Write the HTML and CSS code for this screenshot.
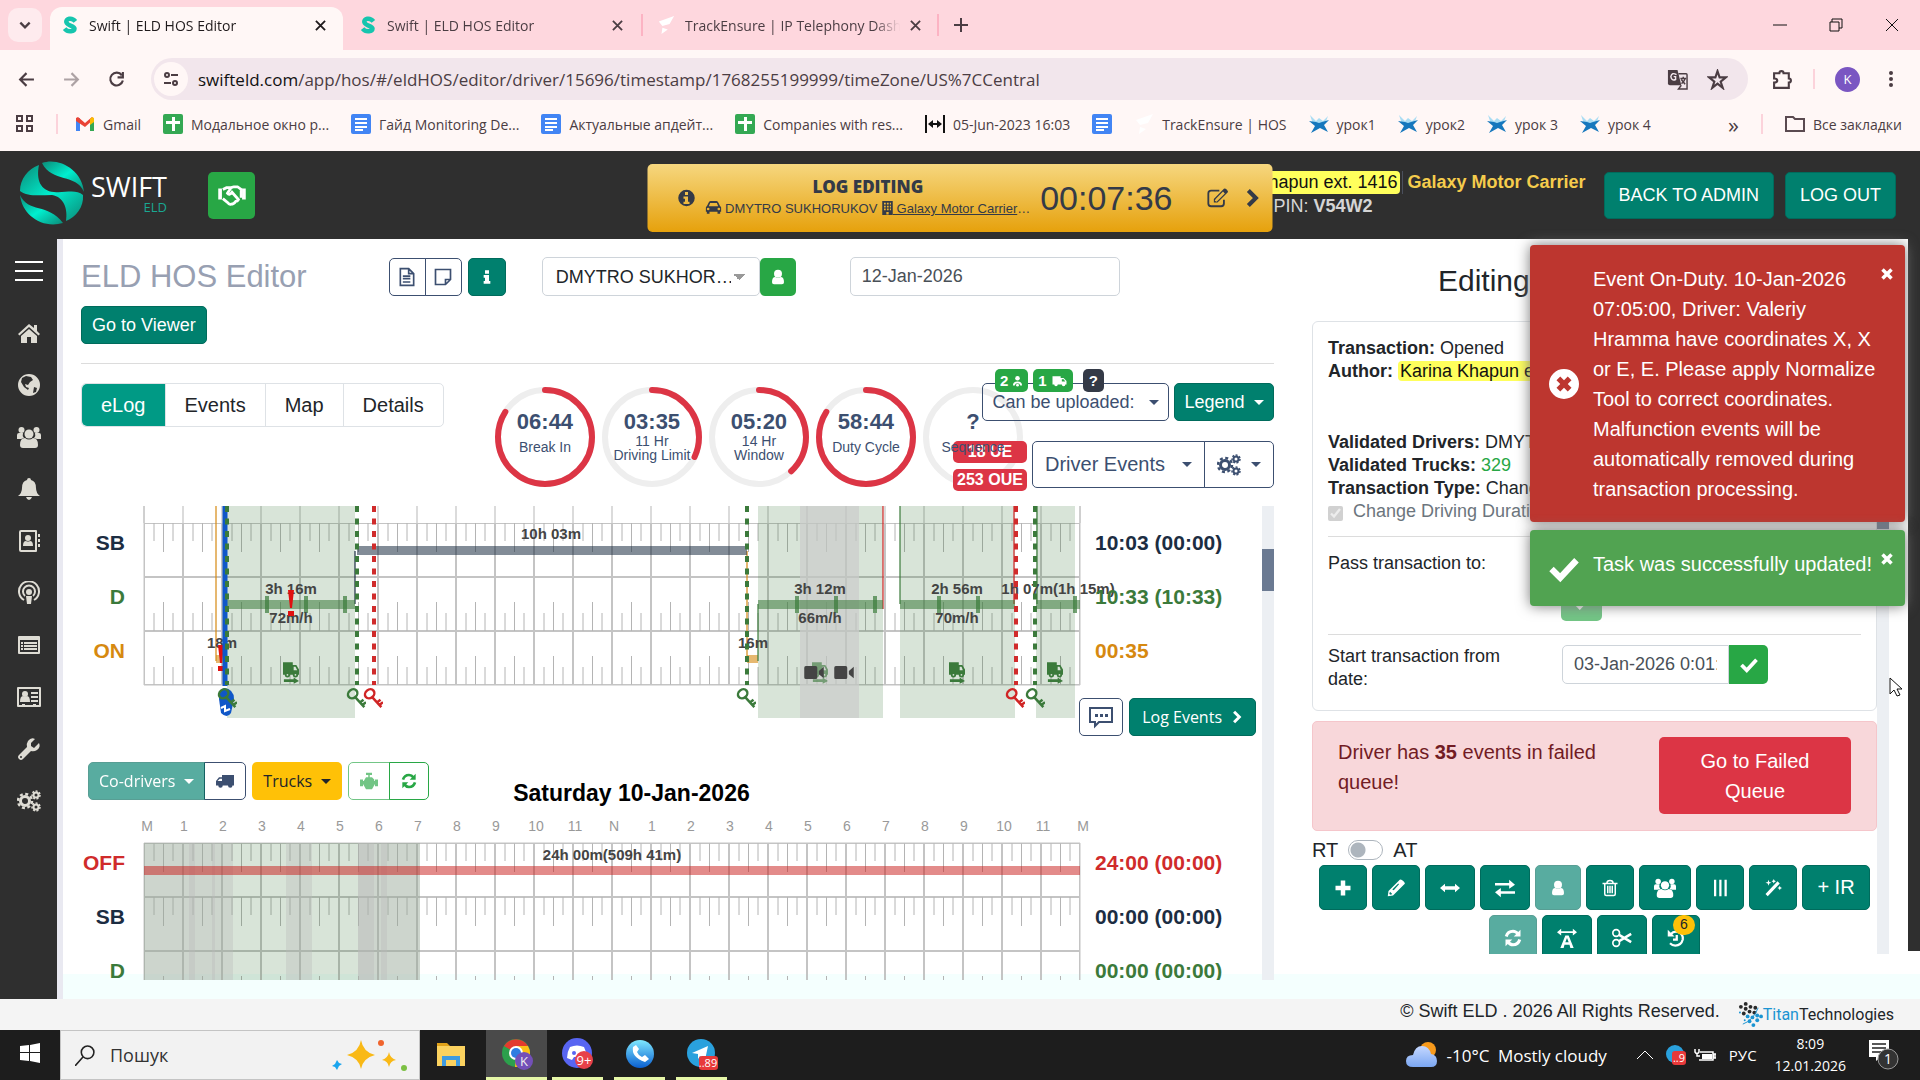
FILE: index.html
```html
<!DOCTYPE html>
<html lang="en">
<head>
    <meta charset="UTF-8">
    <meta name="viewport" content="width=device-width, initial-scale=1.0">
    <title>Swift | ELD HOS Editor</title>
    <link rel="stylesheet" href="styles.css">
</head>
<body>
    <!-- Icon set -->
    <svg class="sprite" aria-hidden="true">
        <defs>
            <linearGradient id="teal" x1="0" y1="0" x2="1" y2="1">
                <stop offset="0" stop-color="#0b8a77"/><stop offset=".5" stop-color="#00efcf"/><stop offset="1" stop-color="#0b8a77"/>
            </linearGradient>
            <linearGradient id="sky" x1="0" y1="0" x2="0" y2="1">
                <stop offset="0" stop-color="#7fe9ff"/><stop offset="1" stop-color="#0a5fd0"/>
            </linearGradient>
            <linearGradient id="cloud" x1="0" y1="0" x2="0" y2="1">
                <stop offset="0" stop-color="#c5d8ff"/><stop offset="1" stop-color="#7ba7f2"/>
            </linearGradient>
            <!-- Hour grid, ticks hanging from the top or standing on the bottom of a row -->
            <pattern id="ticksTop" width="39" height="54" patternUnits="userSpaceOnUse">
                <path d="M0 0V54M39 0V54M0 0H39M0 54H39" stroke="#c4c4c4" stroke-width="2"/>
                <path d="M10 0V18M29 0V18M19.500 0V29" stroke="#b4b4b4"/>
            </pattern>
            <pattern id="ticksBottom" width="39" height="54" patternUnits="userSpaceOnUse">
                <path d="M0 0V54M39 0V54M0 0H39M0 54H39" stroke="#c4c4c4" stroke-width="2"/>
                <path d="M10 54V36M29 54V36M19.500 54V25" stroke="#b4b4b4"/>
            </pattern>
        </defs>
        <symbol id="swift" viewBox="0 0 64 64">
            <path fill="url(#teal)" d="M22 2C38-4 62 8 64 31C56 12 32 22 22 2z"/>
            <path fill="url(#teal)" d="M19 4C16 18 20 30 34 31C46 32 56 28 63 34C64 46 56 56 46 60C48 48 44 36 32 34C20 34 8 36 0 30C0 18 8 8 19 4z"/>
            <path fill="url(#teal)" d="M0 34C8 52 28 42 43 62C22 68 2 54 0 34z"/>
        </symbol>
        <symbol id="favicon" viewBox="0 0 20 20">
            <path fill="none" stroke="#16c5ae" stroke-width="5" d="M16 6C12 1 5 3 6 7S15 11 15 14S8 19 4 14"/>
        </symbol>
        <symbol id="home" viewBox="0 0 24 24"><path d="M12 3L1 13l1.500 1.500L12 6l9.500 8.500L23 13l-3-3V4h-3v3zM12 8l-8 7v7h6v-6h4v6h6v-7z"/></symbol>
        <symbol id="globe" viewBox="0 0 24 24"><path fill-rule="evenodd" d="M12 1a11 11 0 100 22a11 11 0 000-22zM9 3l5 1l2 3l-3 2l-2 3l-3-1l1 3l3 1l-1 2l-4-3l-3-5l1-4zM17 14l3 1l-1 4l-3 1z"/></symbol>
        <symbol id="users" viewBox="0 0 24 24"><circle cx="4.500" cy="5" r="3"/><circle cx="19.500" cy="5" r="3"/><path d="M0 14V10q0-2 2-2h4q-1 3 1 5l-3 1zM24 14V10q0-2-2-2h-4q1 3-1 5l3 1z"/><circle cx="12" cy="9" r="4.500"/><path d="M3 20q0-7 5-7q4 3 8 0q5 0 5 7q0 3-3 3H6q-3 0-3-3z"/></symbol>
        <symbol id="bell" viewBox="0 0 24 24"><path d="M12 1q2 0 2 2q5 1 5 8q0 5 4 8H1q4-3 4-8q0-7 5-8q0-2 2-2zM9 20h6q-1 3-3 3t-3-3z"/></symbol>
        <symbol id="book" viewBox="0 0 24 24"><path fill-rule="evenodd" d="M4 1h15q1 0 1 1v20q0 1-1 1H4q-2 0-2-2V3q0-2 2-2zM4 3v18h14V3z"/><circle cx="11" cy="9" r="3"/><path d="M6 17q0-5 3-5q2 1 4 0q3 0 3 5zM21 5h2v3h-2zM21 10h2v3h-2zM21 15h2v3h-2z"/></symbol>
        <symbol id="podcast" viewBox="0 0 24 24"><path fill="none" stroke="currentColor" stroke-width="2" d="M7 19a10 10 0 1110 0M8 15a6 6 0 118 0"/><circle cx="12" cy="11" r="3"/><path d="M9 15h6l-1 8h-4z"/></symbol>
        <symbol id="list" viewBox="0 0 24 24"><path fill-rule="evenodd" d="M2 3h20q1 0 1 1v16q0 1-1 1H2q-1 0-1-1V4q0-1 1-1zM3 7v12h18V7z"/><path d="M4 9h2v2H4zM7 9h13v2H7zM4 12h2v2H4zM7 12h13v2H7zM4 15h2v2H4zM7 15h13v2H7z"/></symbol>
        <symbol id="idcard" viewBox="0 0 24 24"><path fill-rule="evenodd" d="M1 2h22q1 0 1 1v18q0 1-1 1H1q-1 0-1-1V3q0-1 1-1zM2 4v16h3v-1h3v1h8v-1h3v1h3V4z"/><circle cx="8" cy="9" r="3"/><path d="M3 17q0-6 3-6q2 1 4 0q3 0 3 6zM14 7h7v2h-7zM14 11h7v2h-7zM14 15h7v2h-7z"/></symbol>
        <symbol id="wrench" viewBox="0 0 24 24"><path fill-rule="evenodd" d="M22 6q2 4-2 7q-3 2-6 1l-8 8q-2 2-4 0t0-4l8-8q-1-3 1-6q3-4 7-2l-4 4v3l3 2zM4 19a1 1 0 100 2a1 1 0 000-2z"/></symbol>
        <symbol id="cogs" viewBox="0 0 24 24"><circle cx="8" cy="12" r="4.500" fill="none" stroke="currentColor" stroke-width="3"/><circle cx="8" cy="12" r="7" fill="none" stroke="currentColor" stroke-width="2.500" stroke-dasharray="3 2.500"/><circle cx="19" cy="6" r="2.500" fill="none" stroke="currentColor" stroke-width="2"/><circle cx="19" cy="6" r="4" fill="none" stroke="currentColor" stroke-width="1.500" stroke-dasharray="2 1.600"/><circle cx="19" cy="18" r="2.500" fill="none" stroke="currentColor" stroke-width="2"/><circle cx="19" cy="18" r="4" fill="none" stroke="currentColor" stroke-width="1.500" stroke-dasharray="2 1.600"/></symbol>
        <symbol id="handshake" viewBox="0 0 30 24"><path d="M0 5h4v12H0zM26 5h4v12h-4z"/><path fill="none" stroke="currentColor" stroke-width="3" d="M5 6l4-2h5l-4 6q2 3 5-1l7 8q-1 2-3 2q-2 3-5 3q-2 1-4-2l-5-4M14 4l3-1h4l4 3v9"/></symbol>
        <symbol id="file" viewBox="0 0 24 24"><path fill="none" stroke="currentColor" stroke-width="2" d="M4 2h10l6 6v14H4zM14 2v6h6M7 11h9M7 14h9M7 18h9"/></symbol>
        <symbol id="note" viewBox="0 0 24 24"><path fill="none" stroke="currentColor" stroke-width="2" d="M3 3h18v12l-6 6H3zM21 15h-6v6"/></symbol>
        <symbol id="info" viewBox="0 0 24 24"><path d="M9 2h6v5H9zM7 9h8v9h2v4H7v-4h2v-5H7z"/></symbol>
        <symbol id="infoCircle" viewBox="0 0 24 24"><path fill-rule="evenodd" d="M12 1a11 11 0 100 22a11 11 0 000-22zM10 4h4v4h-4zM8 10h6v7h2v3H8v-3h2v-4H8z"/></symbol>
        <symbol id="user" viewBox="0 0 24 24"><circle cx="12" cy="7" r="6"/><path d="M3 20q0-8 5-8q4 3 8 0q5 0 5 8q0 3-3 3H6q-3 0-3-3z"/></symbol>
        <symbol id="car" viewBox="0 0 24 24"><path fill-rule="evenodd" d="M2 11l3-6q1-2 3-2h8q2 0 3 2l3 6q2 1 2 3v5h-2v3h-4v-3H6v3H2v-3H0v-5q0-2 2-3zM5 11h14l-2-5H7zM4 13a2 2 0 100 4a2 2 0 000-4zM20 13a2 2 0 100 4a2 2 0 000-4z"/></symbol>
        <symbol id="building" viewBox="0 0 20 24"><path fill-rule="evenodd" d="M1 0h18v24H1zM4 3v3h3V3zM9 3v3h3V3zM14 3v3h2V3zM4 8v3h3V8zM9 8v3h3V8zM14 8v3h2V8zM4 13v3h3v-3zM9 13v3h3v-3zM14 13v3h2v-3zM8 19v4h4v-4z"/></symbol>
        <symbol id="edit" viewBox="0 0 24 24"><path fill="none" stroke="currentColor" stroke-width="2" d="M14 4H5Q2 4 2 7v11q0 3 3 3h11q3 0 3-3v-4"/><path fill-rule="evenodd" d="M19 2q2-1 4 2q1 1 0 2L12 17H8v-4zM10 13l-1 2l2 1l9-9l-2-2z"/></symbol>
        <symbol id="chevron" viewBox="0 0 16 24"><path fill="none" stroke="currentColor" stroke-width="5" d="M3 3l9 9l-9 9"/></symbol>
        <symbol id="truck" viewBox="0 0 24 24"><path fill-rule="evenodd" d="M24 4v14h-2a3 3 0 01-6 0H9a3 3 0 01-6 0H0v-6l4-5h4V4zM2 12h6V9H5z"/><circle cx="6" cy="18" r="2"/><circle cx="19" cy="18" r="2"/></symbol>
        <symbol id="truckRight" viewBox="0 0 24 24"><path fill-rule="evenodd" d="M0 4h14v3h5l5 5v6h-2a3 3 0 01-6 0H9a3 3 0 01-6 0H0zM16 9v4h6l-3-4z"/><circle cx="6" cy="18" r="2"/><circle cx="19" cy="18" r="2"/></symbol>
        <symbol id="truckArrow" viewBox="0 0 18 24"><path fill-rule="evenodd" d="M0 0h11v3h4l3 5v6H0zM12 5v4h4l-2-4z"/><circle cx="5" cy="14" r="3"/><circle cx="14" cy="14" r="3"/><circle cx="5" cy="14" r="1" fill="#d8e3d8"/><circle cx="14" cy="14" r="1" fill="#d8e3d8"/><path d="M1 19h11v-2l6 4l-6 3v-2H1z"/></symbol>
        <symbol id="driver" viewBox="0 0 24 24"><circle cx="12" cy="6" r="5"/><path d="M2 22q0-9 10-9t10 9h-4q-1-5-6-5t-6 5z"/><circle cx="12" cy="21" r="3"/></symbol>
        <symbol id="camera" viewBox="0 0 24 16"><path d="M2 0h12q2 0 2 2v12q0 2-2 2H2q-2 0-2-2V2q0-2 2-2zM18 6l6-5v14l-6-5z"/></symbol>
        <symbol id="key" viewBox="0 0 24 24"><g fill="none" stroke="currentColor" stroke-width="3"><ellipse cx="8" cy="7" rx="6" ry="5" transform="rotate(-40 8 7)"/><path d="M11 11l11 12M17 17l4-3M20 20l4-3"/></g></symbol>
        <symbol id="bang" viewBox="0 0 6 26"><path d="M0 0h6l-2 18H2zM0 21h6v5H0z"/></symbol>
        <symbol id="comment" viewBox="0 0 24 24"><path fill="none" stroke="currentColor" stroke-width="2" d="M1 3h22v14H10l-4 4v-4H1z"/><path d="M6 9h3v3H6zM11 9h3v3h-3zM16 9h3v3h-3z"/></symbol>
        <symbol id="engine" viewBox="0 0 24 24"><path d="M8 1h8v3h-3v3h3l3 3v2h1v-2h4v9h-4v-3l-4 7H8l-4-7v3H0v-9h4v2h1l3-5h3V4H8z"/></symbol>
        <symbol id="refresh" viewBox="0 0 24 24"><path fill="none" stroke="currentColor" stroke-width="4" d="M3 10q2-7 9-7q4 0 7 4M21 14q-2 7-9 7q-4 0-7-4"/><path d="M22 1v9h-9zM2 23v-9h9z"/></symbol>
        <symbol id="check" viewBox="0 0 24 24"><path fill="none" stroke="currentColor" stroke-width="5" d="M2 12l7 7L22 5"/></symbol>
        <symbol id="plus" viewBox="0 0 24 24"><path d="M9 2h6v7h7v6h-7v7H9v-7H2V9h7z"/></symbol>
        <symbol id="pencil" viewBox="0 0 24 24"><path fill-rule="evenodd" d="M17 1q2-1 5 2t1 4L8 22l-7 1l1-7zM4 17l-1 3l2 1l2-1zM15 6L7 14l2 1l7-8z"/></symbol>
        <symbol id="arrowsH" viewBox="0 0 24 24"><path d="M0 12l6-5v3h12V7l6 5l-6 5v-3H6v3z"/></symbol>
        <symbol id="exchange" viewBox="0 0 24 24"><path d="M0 6h17V2l7 6l-7 5v-4H0zM24 19H7v4l-7-6l7-5v4h17z"/></symbol>
        <symbol id="trash" viewBox="0 0 24 24"><path fill="none" stroke="currentColor" stroke-width="2" d="M2 6h20M8 5q0-3 4-3t4 3M5 6v14q0 2 2 2h10q2 0 2-2V6M9 9v10M12 9v10M15 9v10"/></symbol>
        <symbol id="bars" viewBox="0 0 24 24"><path d="M4 1h3v22H4zM11 1h3v22h-3zM18 1h3v22h-3z"/></symbol>
        <symbol id="wand" viewBox="0 0 24 24"><path d="M2 20L18 3l3 3L5 23zM6 1l1 3l3 1l-3 1l-1 3l-1-3l-3-1l3-1zM13 0l1 2l2 1l-2 1l-1 2l-1-2l-2-1l2-1zM21 9l1 2l2 1l-2 1l-1 2l-1-2l-2-1l2-1z"/></symbol>
        <symbol id="textWidth" viewBox="0 0 24 24"><path d="M0 5l5-4v3h14V1l5 4l-5 4V6H5v3zM10 9h4l6 15h-4l-1-4H9l-1 4H4zM10 17h4l-2-5z" fill-rule="evenodd"/></symbol>
        <symbol id="cut" viewBox="0 0 24 24"><g fill="none" stroke="currentColor" stroke-width="2"><circle cx="5" cy="6" r="4"/><circle cx="5" cy="18" r="4"/><path stroke-width="3" d="M8 8l15 9M8 16l15-9"/></g></symbol>
        <symbol id="history" viewBox="0 0 24 24"><path fill="none" stroke="currentColor" stroke-width="3" d="M5 7q4-5 10-3q7 3 6 10q-2 8-10 8q-4 0-7-3M13 8v6H8"/><path d="M1 1v9h9z"/></symbol>
        <symbol id="times" viewBox="0 0 24 24"><path fill="none" stroke="currentColor" stroke-width="7" d="M3 3l18 18M21 3L3 21"/></symbol>
        <symbol id="timesCircle" viewBox="0 0 24 24"><path fill-rule="evenodd" d="M12 0a12 12 0 100 24a12 12 0 000-24zM6 9l3-3l3 3l3-3l3 3l-3 3l3 3l-3 3l-3-3l-3 3l-3-3l3-3z"/></symbol>
        <symbol id="close" viewBox="0 0 12 12"><path fill="none" stroke="currentColor" stroke-width="2" d="M1 1l10 10M11 1L1 11"/></symbol>
        <symbol id="sheet" viewBox="0 0 20 20"><rect width="20" height="20" rx="2" fill="#34a853"/><path d="M9 3h3v14H9zM3 7h14v3H3z" fill="#fff"/></symbol>
        <symbol id="doc" viewBox="0 0 20 20"><rect width="20" height="20" rx="2" fill="#4285f4"/><path d="M4 4h12v2H4zM4 8h12v2H4zM4 12h12v2H4zM4 15h8v2H4z" fill="#fff"/></symbol>
        <symbol id="bird" viewBox="0 0 20 20"><path fill="#fff" d="M2 6L19 0l-5 9l-8 2zM6 13l6 2l-7 5z"/></symbol>
        <symbol id="star4" viewBox="0 0 20 20"><path fill="#a9dcf3" d="M1 1l6 6l3-3l4 3l5-5l-3 8H4z"/><path fill="#1577bd" d="M0 7l7 1l3 1l3-1l7-2l-5 5l4 7l-8-4l-9 5l4-7z"/></symbol>
    </svg>

    <!-- Browser -->
    <header class="browser">
        <div class="tab-strip">
            <button class="tab-search" aria-label="Search tabs"><svg viewBox="0 0 12 12"><path d="M2 4l4 4l4-4" fill="none" stroke="currentColor" stroke-width="2"/></svg></button>
            <div class="tab active"><svg class="fav"><use href="#favicon"/></svg><span class="tab-title">Swift | ELD HOS Editor</span><button class="tab-close" aria-label="Close tab"><svg><use href="#close"/></svg></button></div>
            <div class="tab"><svg class="fav"><use href="#favicon"/></svg><span class="tab-title">Swift | ELD HOS Editor</span><button class="tab-close" aria-label="Close tab"><svg><use href="#close"/></svg></button></div>
            <div class="tab bordered"><svg class="fav"><use href="#bird"/></svg><span class="tab-title">TrackEnsure | IP Telephony Dashboard</span><button class="tab-close" aria-label="Close tab"><svg><use href="#close"/></svg></button></div>
            <button class="new-tab" aria-label="New tab"><svg viewBox="0 0 14 14"><path d="M7 0v14M0 7h14" stroke="currentColor" stroke-width="2"/></svg></button>
            <div class="window-buttons">
                <button aria-label="Minimize"><svg viewBox="0 0 14 14"><path d="M0 7h14" stroke="currentColor"/></svg></button>
                <button aria-label="Restore"><svg viewBox="0 0 14 14"><path d="M1 4h9v9H1zM3 4V1h10v9h-3" fill="none" stroke="currentColor"/></svg></button>
                <button aria-label="Close"><svg viewBox="0 0 14 14"><path d="M1 1l12 12M13 1L1 13" stroke="currentColor"/></svg></button>
            </div>
        </div>
        <div class="nav-bar">
            <button class="nav-btn" aria-label="Back"><svg viewBox="0 0 16 16"><path d="M15 8H2M8 2L2 8l6 6" fill="none" stroke="currentColor" stroke-width="2"/></svg></button>
            <button class="nav-btn dim" aria-label="Forward"><svg viewBox="0 0 16 16"><path d="M1 8h13M8 2l6 6l-6 6" fill="none" stroke="currentColor" stroke-width="2"/></svg></button>
            <button class="nav-btn" aria-label="Reload"><svg viewBox="0 0 16 16"><path d="M13 4a6 6 0 101 5M14 1v5H9" fill="none" stroke="currentColor" stroke-width="2"/></svg></button>
            <div class="address">
                <span class="site-info"><svg viewBox="0 0 16 16"><g fill="none" stroke="currentColor" stroke-width="2"><circle cx="4" cy="4" r="2"/><circle cx="12" cy="12" r="2"/><path d="M8 4h7M1 12h7"/></g></svg></span>
                <span class="url"><b>swifteld.com</b>/app/hos/#/eldHOS/editor/driver/15696/timestamp/1768255199999/timeZone/US%7CCentral</span>
                <button class="addr-btn" aria-label="Translate"><svg viewBox="0 0 22 22"><path fill="#4b3d43" d="M1 1h10l4 16H3q-2 0-2-2z"/><path fill="none" stroke="#4b3d43" stroke-width="1.500" d="M12 5h8q1 0 1 1v15h-9l3-4M14 10h6M17 8v2M19 10q-2 5-4 5M15 11l4 5"/><path fill="none" stroke="#f2e6ec" stroke-width="1.500" d="M10 6Q5 3 4 8q1 5 5 3V8H7"/></svg></button>
                <button class="addr-btn" aria-label="Bookmark"><svg viewBox="0 0 20 20"><path fill="none" stroke="currentColor" stroke-width="2" d="M10 2l2 6h6l-5 4l2 6l-5-4l-5 4l2-6l-5-4h6z"/></svg></button>
            </div>
            <button class="nav-btn ext" aria-label="Extensions"><svg viewBox="0 0 20 20"><path fill="none" stroke="currentColor" stroke-width="2" d="M2 4h5a2 2 0 014 0h5v5a2 2 0 010 4v5H2v-5q3 0 3-2t-3-2z"/></svg></button>
            <span class="divider"></span>
            <span class="avatar">K</span>
            <button class="nav-btn menu" aria-label="Menu"><svg viewBox="0 0 16 16"><circle cx="8" cy="2" r="2"/><circle cx="8" cy="8" r="2"/><circle cx="8" cy="14" r="2"/></svg></button>
        </div>
        <nav class="bookmarks">
            <svg class="apps" viewBox="0 0 18 18"><path d="M1 1h5v5H1zM11 1h5v5h-5zM1 11h5v5H1zM11 11h5v5h-5z" fill="none" stroke="currentColor" stroke-width="2"/></svg>
            <span class="divider"></span>
            <a href="#" class="first"><svg viewBox="0 0 20 20"><path fill="#4285f4" d="M1 4h4v13H1z"/><path fill="#34a853" d="M15 6h4v11h-4z"/><path fill="#ea4335" d="M1 4l2-1l7 6l7-6l2 2l-9 8L1 7z"/><path fill="#fbbc04" d="M15 5l2-2l2 1v4l-4 3z"/></svg>Gmail</a>
            <a href="#"><svg><use href="#sheet"/></svg>Модальное окно р...</a>
            <a href="#"><svg><use href="#doc"/></svg>Гайд Monitoring De...</a>
            <a href="#"><svg><use href="#doc"/></svg>Актуальные апдейт...</a>
            <a href="#"><svg><use href="#sheet"/></svg>Companies with res...</a>
            <a href="#"><svg viewBox="0 0 20 20"><path d="M1 1v18M19 1v18" stroke="#111" stroke-width="2"/><path d="M3 10l5-4v3h4V6l5 4l-5 4v-3H8v3z" fill="#111"/></svg>05-Jun-2023 16:03</a>
            <a href="#" aria-label="Document"><svg><use href="#doc"/></svg></a>
            <a href="#"><svg><use href="#bird"/></svg>TrackEnsure | HOS</a>
            <a href="#"><svg><use href="#star4"/></svg>урок1</a>
            <a href="#"><svg><use href="#star4"/></svg>урок2</a>
            <a href="#"><svg><use href="#star4"/></svg>урок 3</a>
            <a href="#"><svg><use href="#star4"/></svg>урок 4</a>
            <span class="more">»</span>
            <span class="divider"></span>
            <a href="#" class="all"><svg viewBox="0 0 20 20"><path fill="none" stroke="#5a4a50" stroke-width="2" d="M1 3h7l2 2h9v12H1z"/></svg>Все закладки</a>
        </nav>
    </header>

    <!-- Application header -->
    <div class="app-header">
        <svg class="logo"><use href="#swift"/></svg>
        <div class="brand"><span>SWIFT</span><small>ELD</small></div>
        <button class="btn-handshake" aria-label="Deals"><svg><use href="#handshake"/></svg></button>
        <div class="account">
            <div class="account-line"><mark>Karina Khapun ext. 1416</mark><span class="carrier">Galaxy Motor Carrier</span></div>
            <div class="account-pin">PIN: <b>V54W2</b></div>
        </div>
        <button class="btn btn-teal btn-top">BACK TO ADMIN</button>
        <button class="btn btn-teal btn-top">LOG OUT</button>
        <div class="log-editing">
            <svg class="le-info"><use href="#infoCircle"/></svg>
            <div class="le-text">
                <strong>LOG EDITING</strong>
                <div><svg class="i16"><use href="#car"/></svg> DMYTRO SUKHORUKOV <a href="#"><svg class="i12"><use href="#building"/></svg> Galaxy Motor Carrier</a>…</div>
            </div>
            <div class="le-timer">00:07:36</div>
            <button aria-label="Edit"><svg class="le-edit"><use href="#edit"/></svg></button>
            <button aria-label="Next"><svg class="le-next"><use href="#chevron"/></svg></button>
        </div>
    </div>

    <div class="shell">
        <nav class="sidebar">
            <button class="burger" aria-label="Toggle menu"><i></i><i></i><i></i></button>
            <a href="#" aria-label="Home"><svg><use href="#home"/></svg></a>
            <a href="#" aria-label="World"><svg><use href="#globe"/></svg></a>
            <a href="#" aria-label="Users"><svg><use href="#users"/></svg></a>
            <a href="#" aria-label="Alerts"><svg><use href="#bell"/></svg></a>
            <a href="#" aria-label="Contacts"><svg><use href="#book"/></svg></a>
            <a href="#" aria-label="Broadcast"><svg><use href="#podcast"/></svg></a>
            <a href="#" aria-label="List"><svg><use href="#list"/></svg></a>
            <a href="#" aria-label="Cards"><svg><use href="#idcard"/></svg></a>
            <a href="#" aria-label="Tools"><svg><use href="#wrench"/></svg></a>
            <a href="#" aria-label="Settings"><svg><use href="#cogs"/></svg></a>
        </nav>

        <main class="editor">
            <div class="title-row">
                <h1>ELD HOS Editor</h1>
                <div class="btn-group">
                    <button class="btn btn-outline" aria-label="Report"><svg class="i20"><use href="#file"/></svg></button>
                    <button class="btn btn-outline" aria-label="Note"><svg class="i20"><use href="#note"/></svg></button>
                </div>
                <button class="btn btn-teal btn-info" aria-label="Info"><svg class="i16"><use href="#info"/></svg></button>
                <div class="driver-pick">
                    <select aria-label="Driver"><option>DMYTRO SUKHOR…</option></select>
                    <button class="btn btn-green" aria-label="Driver profile"><svg class="i16"><use href="#user"/></svg></button>
                </div>
                <input class="field date" type="text" aria-label="Log date" value="12-Jan-2026">
            </div>
            <button class="btn btn-teal viewer">Go to Viewer</button>
            <hr>

            <div class="tools-row">
                <div class="tabs">
                    <button class="active">eLog</button><button>Events</button><button>Map</button><button>Details</button>
                </div>
                <div class="gauges">
                    <div class="gauge"><svg viewBox="0 0 100 100"><circle cx="50" cy="50" r="47"/><circle class="arc" cx="50" cy="50" r="47" pathLength="100" stroke-dasharray="84 100"/></svg><div class="gauge-text"><b>06:44</b><span>Break In</span></div></div>
                    <div class="gauge"><svg viewBox="0 0 100 100"><circle cx="50" cy="50" r="47"/><circle class="arc" cx="50" cy="50" r="47" pathLength="100" stroke-dasharray="32 100"/></svg><div class="gauge-text two"><b>03:35</b><span>11 Hr<br>Driving Limit</span></div></div>
                    <div class="gauge"><svg viewBox="0 0 100 100"><circle cx="50" cy="50" r="47"/><circle class="arc" cx="50" cy="50" r="47" pathLength="100" stroke-dasharray="38 100"/></svg><div class="gauge-text two"><b>05:20</b><span>14 Hr<br>Window</span></div></div>
                    <div class="gauge"><svg viewBox="0 0 100 100"><circle cx="50" cy="50" r="47"/><circle class="arc" cx="50" cy="50" r="47" pathLength="100" stroke-dasharray="84 100"/></svg><div class="gauge-text"><b>58:44</b><span>Duty Cycle</span></div></div>
                    <div class="gauge"><svg viewBox="0 0 100 100"><circle cx="50" cy="50" r="47"/></svg><div class="gauge-text"><b>?</b><span>Sequence</span></div></div>
                </div>
                <div class="controls">
                    <div class="controls-line">
                        <button class="btn btn-outline upload">Can be uploaded: <i class="caret"></i>
                            <span class="chips"><span class="chip">2 <svg><use href="#driver"/></svg></span><span class="chip">1 <svg class="i16"><use href="#truckRight"/></svg></span><span class="chip dark">?</span></span>
                        </button>
                        <button class="btn btn-teal legend">Legend <i class="caret"></i></button>
                    </div>
                    <div class="controls-line">
                        <div class="badges"><span>18 UE</span><span>253 OUE</span></div>
                        <div class="btn-group big">
                            <button class="btn btn-outline">Driver Events <i class="caret"></i></button>
                            <button class="btn btn-outline" aria-label="Settings"><svg class="i24"><use href="#cogs"/></svg> <i class="caret"></i></button>
                        </div>
                    </div>
                </div>
            </div>

            <div class="log-scroll">
                <div class="log-list">
                    <section class="log log-first">
                        <div class="row-names"><span class="sb">SB</span><span class="d">D</span><span class="on">ON</span></div>
                        <svg class="chart" viewBox="0 0 936 212">
                            <path d="M0 0V17M39 0V17M78 0V17M117 0V17M156 0V17M195 0V17M234 0V17M273 0V17M312 0V17M351 0V17M390 0V17M429 0V17M468 0V17M507 0V17M546 0V17M585 0V17M624 0V17M663 0V17M702 0V17M741 0V17M780 0V17M819 0V17M858 0V17M897 0V17M936 0V17" stroke="#d0d0d0" stroke-width="1.500"/>
                            <g transform="translate(0 17)"><rect width="936" height="54" fill="url(#ticksTop)"/></g>
                            <g transform="translate(0 71)"><rect width="936" height="54" fill="url(#ticksBottom)"/></g>
                            <g transform="translate(0 125)"><rect width="936" height="54" fill="url(#ticksBottom)"/></g>
                            <path class="frame" d="M0 0V179H936V0"/>
                            <g class="shade">
                                <rect x="83" width="128" height="212"/><rect x="614" width="125" height="212"/><rect x="756" width="115" height="212"/><rect x="892" width="39" height="212"/>
                            </g>
                            <rect class="shade-grey" x="656" width="59" height="212"/>
                            <path d="M72 0V155M603 45V155" stroke="#d68910" stroke-opacity=".6" stroke-width="2"/>
                            <path d="M72 149h7v8h-7zM603 149h11v8h-11z" fill="#d68910" fill-opacity=".6"/>
                            <path d="M211 45V98" stroke="#1c2d42" stroke-opacity=".6" stroke-width="2"/>
                            <path d="M213 40h390v9H213z" fill="#1c2d42" fill-opacity=".55"/>
                            <path d="M614 98V155M756 0V98M893 0V98" stroke="#3b7a3b" stroke-opacity=".6" stroke-width="2"/>
                            <path d="M739 0V103M870 0V98" stroke="#d02525" stroke-opacity=".6" stroke-width="2"/>
                            <path d="M83 94h128v9H83zM614 94h125v9H614zM756 94h115v9H756zM892 94h44v9H892z" fill="#3b7a3b" fill-opacity=".55"/>
                            <path d="M123 90V107M162 90V107M201 90V107M653 90V107M692 90V107M731 90V107M795 90V107M834 90V107M931 90V107" stroke="#3b7a3b" stroke-opacity=".7" stroke-width="4"/>
                            <g class="labels">
                                <text x="407" y="33">10h 03m</text><text x="147" y="88">3h 16m</text><text x="147" y="117">72m/h</text><text x="78" y="142">18m</text><text x="609" y="142">16m</text>
                                <text x="676" y="88">3h 12m</text><text x="676" y="117">66m/h</text><text x="813" y="88">2h 56m</text><text x="813" y="117">70m/h</text><text x="914" y="88">1h 07m(1h 15m)</text>
                            </g>
                            <g fill="#e01010" color="#e01010"><use href="#bang" x="144" y="84" width="6" height="26"/><use href="#bang" x="74" y="139" width="6" height="26"/></g>
                            <path d="M81 0V180" stroke="#1057c8" stroke-width="5"/>
                            <path class="dash green" d="M83 0V179M213 0V179M603 0V179M891 0V179"/>
                            <path class="dash red" d="M230 0V179M872 0V179"/>
                            <g fill="#3b7a3b">
                                <use href="#truckArrow" x="139" y="156" width="16" height="22"/><use href="#truckArrow" x="805" y="156" width="16" height="22"/><use href="#truckArrow" x="903" y="156" width="16" height="22"/>
                                <use href="#truckArrow" x="668" y="156" width="16" height="22" opacity=".6"/>
                            </g>
                            <g fill="#444"><use href="#camera" x="660" y="160" width="20" height="13"/><use href="#camera" x="690" y="160" width="20" height="13"/></g>
                            <path d="M80 182q10 1 10 11l-3 14q-4 6-10 0l-2-14q0-9 5-11z" fill="#1057c8"/><path d="M77 202l4-2v5l5-2" fill="none" stroke="#fff" stroke-width="2"/>
                            <g color="#3b7a3b"><use href="#key" x="73" y="182" width="20" height="20"/><use href="#key" x="202" y="182" width="20" height="20"/><use href="#key" x="592" y="182" width="20" height="20"/><use href="#key" x="881" y="182" width="20" height="20"/></g>
                            <g color="#d02525"><use href="#key" x="219" y="182" width="20" height="20"/><use href="#key" x="861" y="182" width="20" height="20"/></g>
                        </svg>
                        <div class="totals"><span class="sb">10:03 (00:00)</span><span class="d">10:33 (10:33)</span><span class="on">00:35</span></div>
                        <div class="log-actions">
                            <button class="btn btn-outline" aria-label="Comments"><svg class="i24"><use href="#comment"/></svg></button>
                            <button class="btn btn-teal segoe">Log Events <svg class="i12"><use href="#chevron"/></svg></button>
                        </div>
                    </section>

                    <div class="day-head">
                        <div class="btn-group">
                            <button class="btn btn-teal segoe faded">Co-drivers <i class="caret"></i></button>
                            <button class="btn btn-outline" aria-label="Truck"><svg class="i18"><use href="#truck"/></svg></button>
                        </div>
                        <button class="btn btn-yellow segoe">Trucks <i class="caret"></i></button>
                        <div class="btn-group green-group">
                            <button class="btn engine" aria-label="Engine"><svg class="i18"><use href="#engine"/></svg></button>
                            <button class="btn" aria-label="Refresh"><svg class="i16"><use href="#refresh"/></svg></button>
                        </div>
                        <h2>Saturday 10-Jan-2026</h2>
                    </div>

                    <section class="log">
                        <div class="row-names second"><span class="off">OFF</span><span class="sb">SB</span><span class="d">D</span></div>
                        <svg class="chart" viewBox="0 0 936 200">
                            <g class="hours">
                                <text x="3" y="14">M</text><text x="40" y="14">1</text><text x="79" y="14">2</text><text x="118" y="14">3</text><text x="157" y="14">4</text><text x="196" y="14">5</text><text x="235" y="14">6</text><text x="274" y="14">7</text><text x="313" y="14">8</text><text x="352" y="14">9</text><text x="392" y="14">10</text><text x="431" y="14">11</text><text x="470" y="14">N</text><text x="508" y="14">1</text><text x="547" y="14">2</text><text x="586" y="14">3</text><text x="625" y="14">4</text><text x="664" y="14">5</text><text x="703" y="14">6</text><text x="742" y="14">7</text><text x="781" y="14">8</text><text x="820" y="14">9</text><text x="860" y="14">10</text><text x="899" y="14">11</text><text x="939" y="14">M</text>
                            </g>
                            <g transform="translate(0 26)"><rect width="936" height="54" fill="url(#ticksTop)"/></g>
                            <g transform="translate(0 80)"><rect width="936" height="54" fill="url(#ticksTop)"/></g>
                            <g transform="translate(0 134)"><rect width="936" height="54" fill="url(#ticksBottom)"/></g>
                            <path class="frame" d="M0 200V26H936V200"/>
                            <rect class="shade" y="26" width="276" height="180"/>
                            <g class="shade-light"><rect y="26" width="89" height="180"/><rect x="142" y="26" width="26" height="180"/><rect x="214" y="26" width="62" height="180"/><rect x="45" y="26" width="6" height="180"/><rect x="68" y="26" width="3" height="180"/><rect x="214" y="26" width="16" height="180"/><rect x="237" y="26" width="6" height="180"/></g>
                            <path d="M0 49h936v9H0z" fill="#c9211e" fill-opacity=".52"/>
                            <g class="labels"><text x="468" y="43">24h 00m(509h 41m)</text></g>
                        </svg>
                        <div class="totals second"><span class="off">24:00 (00:00)</span><span class="sb">00:00 (00:00)</span><span class="d">00:00 (00:00)</span></div>
                    </section>
                </div>
                <div class="scroll-track"><i></i></div>
            </div>
        </main>

        <aside class="side">
            <h2>Editing</h2>
            <div class="side-scroll">
                <div class="side-content">
                    <div class="card">
                        <p><b>Transaction:</b> Opened</p>
                        <p><b>Author:</b> <mark>Karina Khapun ext. 1416</mark></p>
                        <p class="spaced"><b>Validated Drivers:</b> DMYTRO</p>
                        <p><b>Validated Trucks:</b> <span class="ok">329</span></p>
                        <p><b>Transaction Type:</b> Change Log</p>
                        <label class="check-line"><input type="checkbox" checked disabled> Change Driving Duration</label>
                        <hr>
                        <div class="form-row pass">
                            <span>Pass transaction to:</span>
                            <button class="btn btn-green pale" aria-label="Pass"><svg class="i18"><use href="#check"/></svg></button>
                        </div>
                        <hr>
                        <div class="form-row">
                            <label for="startDate">Start transaction from date:</label>
                            <div class="input-group">
                                <input class="field" id="startDate" type="text" value="03-Jan-2026 0:01:35">
                                <button class="btn btn-green" aria-label="Apply date"><svg class="i18"><use href="#check"/></svg></button>
                            </div>
                        </div>
                    </div>
                    <div class="alert">
                        <p>Driver has <b>35</b> events in failed queue!</p>
                        <button class="btn btn-red">Go to Failed Queue</button>
                    </div>
                    <label class="switch">RT <input type="checkbox"> AT</label>
                    <div class="actions">
                        <button class="btn btn-teal" aria-label="Add"><svg class="i18"><use href="#plus"/></svg></button>
                        <button class="btn btn-teal" aria-label="Edit"><svg class="i18"><use href="#pencil"/></svg></button>
                        <button class="btn btn-teal" aria-label="Move"><svg class="i20"><use href="#arrowsH"/></svg></button>
                        <button class="btn btn-teal" aria-label="Swap"><svg class="i20"><use href="#exchange"/></svg></button>
                        <button class="btn btn-teal faded" aria-label="User"><svg class="i16"><use href="#user"/></svg></button>
                        <button class="btn btn-teal" aria-label="Delete"><svg class="i18"><use href="#trash"/></svg></button>
                        <button class="btn btn-teal" aria-label="Team"><svg class="i22"><use href="#users"/></svg></button>
                        <button class="btn btn-teal" aria-label="Columns"><svg class="i18"><use href="#bars"/></svg></button>
                        <button class="btn btn-teal" aria-label="Normalize"><svg class="i18"><use href="#wand"/></svg></button>
                        <button class="btn btn-teal">+ IR</button>
                        <button class="btn btn-teal faded" aria-label="Refresh"><svg class="i18"><use href="#refresh"/></svg></button>
                        <button class="btn btn-teal" aria-label="Text width"><svg class="i20"><use href="#textWidth"/></svg></button>
                        <button class="btn btn-teal" aria-label="Cut"><svg class="i20"><use href="#cut"/></svg></button>
                        <button class="btn btn-teal history" aria-label="History"><svg class="i18"><use href="#history"/></svg><span class="count">6</span></button>
                    </div>
                </div>
                <div class="scroll-track side-track"><i></i></div>
            </div>
        </aside>
        <div class="edge"></div>

        <div class="toasts">
            <div class="toast error">
                <svg class="i30"><use href="#timesCircle"/></svg>
                <p>Event On-Duty. 10-Jan-2026 07:05:00, Driver: Valeriy Hramma have coordinates X, X or E, E. Please apply Normalize Tool to correct coordinates. Malfunction events will be automatically removed during transaction processing.</p>
                <button aria-label="Close"><svg class="i12"><use href="#times"/></svg></button>
            </div>
            <div class="toast success">
                <svg class="i30"><use href="#check"/></svg>
                <p>Task was successfully updated!</p>
                <button aria-label="Close"><svg class="i12"><use href="#times"/></svg></button>
            </div>
        </div>
    </div>

    <footer class="app-footer">
        <span>© Swift ELD . 2026 All Rights Reserved.</span>
        <span class="titan">
            <svg viewBox="0 0 26 26"><g fill="#2a2a2a"><circle cx="8" cy="2" r="2"/><circle cx="3" cy="5" r="2"/><circle cx="8" cy="7" r="2"/><circle cx="13" cy="5" r="2"/><circle cx="18" cy="6" r="2"/><circle cx="12" cy="10" r="2"/><circle cx="17" cy="11" r="2"/><circle cx="6" cy="12" r="2"/></g><g fill="#1b94d2"><circle cx="2" cy="11" r="1"/><circle cx="10" cy="15" r="2"/><circle cx="15" cy="16" r="2"/><circle cx="20" cy="14" r="2"/><circle cx="24" cy="15" r="2"/><circle cx="20" cy="19" r="2"/><circle cx="12" cy="20" r="2"/><circle cx="16" cy="24" r="2"/><circle cx="7" cy="19" r="1"/></g><path d="M5 23Q16 19 21 6" fill="none" stroke="#1b94d2"/></svg>
            <span><em>Titan</em>Technologies</span>
        </span>
    </footer>

    <!-- Desktop taskbar -->
    <div class="taskbar">
        <button class="start" aria-label="Start"><svg viewBox="0 0 20 20"><path d="M0 3l9-1v7H0zM10 2l10-2v9H10zM0 10h9v8l-9-1zM10 10h10v10l-10-2z"/></svg></button>
        <label class="search">
            <svg class="glass" viewBox="0 0 20 20"><path d="M12 1a6 6 0 100 12a6 6 0 000-12zM8 11l-8 9" fill="none" stroke="#222" stroke-width="1.500"/></svg>
            <input type="text" placeholder="Пошук" aria-label="Search">
            <svg class="sparkle" viewBox="0 0 76 32"><path fill="#f9b916" d="M30 1q2 12 14 15q-12 3-14 14q-2-11-14-14q12-3 14-15zM58 13q1 6 7 8q-6 1-7 7q-1-6-7-7q6-2 7-8z"/><path fill="#1aa5ee" d="M6 21l2 3l3 1l-3 2l-2 4l-2-3l-3-1l3-2z"/><circle cx="50" cy="4" r="3" fill="#f0642d"/><circle cx="73" cy="29" r="3" fill="#7cc043"/></svg>
        </label>
        <button class="task" aria-label="Files"><svg viewBox="0 0 32 32"><path fill="#e0a21a" d="M2 5h10l3 3h-13z"/><path fill="#fbd25f" d="M2 8h28v20H2z"/><path fill="#3f9be0" d="M7 28V18h18v10h-4v-6H11v6z"/></svg></button>
        <button class="task open current" aria-label="Chrome"><svg viewBox="0 0 32 32"><circle cx="15" cy="15" r="14" fill="#2ca04c"/><path fill="#e33b2e" d="M15 15L3 8a14 14 0 0124 0z"/><path fill="#fbc116" d="M15 15V8h12a14 14 0 01-13 21z"/><circle cx="15" cy="15" r="7" fill="#fff"/><circle cx="15" cy="15" r="5" fill="#2f7de1"/><circle cx="23" cy="23" r="9" fill="#7350b8"/><text x="23" y="28" fill="#eee" font-size="13" text-anchor="middle">K</text></svg></button>
        <button class="task open" aria-label="Discord"><svg viewBox="0 0 32 32"><circle cx="15" cy="15" r="15" fill="#5865f2"/><path fill="#fff" d="M8 9q7-3 14 0q3 6 3 11l-5 2l-2-3h-6l-2 3l-5-2q0-6 3-11z"/><circle cx="12" cy="15" r="2" fill="#5865f2"/><circle cx="22" cy="22" r="9" fill="#e8414a"/><text x="22" y="27" fill="#fff" font-size="13" text-anchor="middle">9+</text></svg></button>
        <button class="task open" aria-label="Phone"><svg viewBox="0 0 32 32"><circle cx="16" cy="16" r="14" fill="url(#sky)"/><path d="M9 9q-2 10 12 15l4-3l-4-4l-3 2q-4-2-5-5l2-3l-3-4z" fill="#fff"/></svg></button>
        <button class="task open" aria-label="Telegram"><svg viewBox="0 0 32 32"><circle cx="15" cy="15" r="14" fill="#2aa1dd"/><path d="M6 15l16-7l-3 14l-5-4l-2 3v-5z" fill="#fff"/><rect x="13" y="18" width="19" height="14" rx="3" fill="#e8393a"/><text x="22" y="29" fill="#fff" font-size="11" text-anchor="middle">..89</text></svg></button>
        <div class="tray">
            <svg class="weather" viewBox="0 0 32 26"><circle cx="22" cy="8" r="8" fill="#f79a1c"/><path d="M7 25q-7 0-7-6t7-6q2-9 9-9t9 8q6 1 6 7t-6 6z" fill="url(#cloud)"/></svg>
            <span class="forecast">-10°C&ensp;Mostly cloudy</span>
            <svg class="up" viewBox="0 0 16 10"><path d="M0 9l8-8l8 8" fill="none" stroke="#fff"/></svg>
            <svg class="tg" viewBox="0 0 20 20"><circle cx="9" cy="9" r="9" fill="#2aa1dd"/><rect x="6" y="6" width="14" height="14" rx="3" fill="#e8393a"/><text x="13" y="17" fill="#fff" font-size="11" text-anchor="middle">..9</text></svg>
            <svg class="battery" viewBox="0 0 22 14"><path d="M6 4h13v8H5M20 6h2v4h-2zM1 1v3q2 3 4 0V1M3 5v3h3" fill="none" stroke="#fff" stroke-width="1.500"/><path d="M8 6h10v5H8z" fill="#fff"/></svg>
            <span class="lang">РУС</span>
            <span class="clock">8:09<br>12.01.2026</span>
            <svg class="notify" viewBox="0 0 32 30"><path d="M1 0h20v17h-8l-5 4v-4H1z" fill="#fff"/><path d="M4 4h14M4 8h14M4 12h9" stroke="#222" stroke-width="1.500"/><circle cx="20" cy="19" r="10" fill="#333" stroke="#999"/><text x="20" y="24" fill="#fff" font-size="14" text-anchor="middle">1</text></svg>
        </div>
    </div>

    <svg class="cursor" viewBox="0 0 13 20"><path d="M1 1v16l4-4l3 6l3-1l-3-6h5z" fill="#fff" stroke="#111"/></svg>
</body>
</html>
```
FILE: styles.css
```css
* {
    box-sizing: border-box;
}
body {
    margin: 0;
    height: 100vh;
    display: flex;
    flex-direction: column;
    overflow: hidden;
    position: relative;
    font-family: "Liberation Sans", Arial, sans-serif;
    font-size: 18px;
    line-height: 23px;
    color: #212529;
    background-color: #fff;
}
button, input, select {
    font-family: inherit;
    font-size: 18px;
    color: inherit;
}
button {
    padding: 0;
    border: none;
    background: none;
    cursor: pointer;
}
svg {
    fill: currentColor;
    flex: none;
}
a {
    color: inherit;
    text-decoration: none;
}
p {
    margin: 0;
}
hr {
    margin: 0;
    border: none;
    border-top: 1px solid #dcdcdc;
}
.sprite {
    position: absolute;
    width: 0;
    height: 0;
}
.i12 { width: 12px; height: 14px; }
.i16 { width: 16px; height: 16px; }
.i18 { width: 18px; height: 18px; }
.i20 { width: 20px; height: 20px; }
.i22 { width: 22px; height: 22px; }
.i24 { width: 24px; height: 24px; }
.i30 { width: 30px; height: 30px; }

/* Browser */
.browser {
    flex: none;
    height: 151px;
    background-color: #fff7f6;
    font-family: "Open Sans", "Noto Sans", sans-serif;
    color: #4b3d43;
}
.browser button {
    display: flex;
    align-items: center;
    justify-content: center;
}
.tab-strip {
    display: flex;
    align-items: center;
    height: 50px;
    background-color: #fed7de;
}
.tab-search {
    width: 34px;
    height: 34px;
    margin: 0 8px;
    border-radius: 10px;
    background-color: #feebee !important;
}
.tab-search svg {
    width: 14px;
}
.tab {
    display: flex;
    align-items: center;
    gap: 10px;
    width: 298px;
    height: 43px;
    align-self: flex-end;
    padding: 0 18px 7px 16px;
    font-size: 14px;
}
.tab.active {
    width: 293px;
    padding-left: 11px;
    padding-right: 17px;
    border-radius: 12px 12px 0 0;
    background-color: #fff7f6;
    color: #1f1a1c;
}
.tab.bordered {
    border-left: 2px solid #fcb3c3;
    border-right: 2px solid #fcb3c3;
    height: 22px;
    align-self: center;
    padding: 0 16px 0 14px;
}
.fav {
    width: 18px;
    height: 18px;
}
.tab-title {
    flex: 1;
    white-space: nowrap;
    overflow: hidden;
    mask-image: linear-gradient(to right, #000 88%, transparent);
}
.tab-close svg {
    width: 11px;
    height: 11px;
}
.new-tab {
    width: 44px;
}
.new-tab svg {
    width: 14px;
}
.window-buttons {
    display: flex;
    margin-left: auto;
    color: #111;
}
.window-buttons button {
    width: 56px;
}
.window-buttons svg {
    width: 14px;
}
.nav-bar {
    display: flex;
    align-items: center;
    height: 58px;
    padding: 0 8px 0 4px;
}
.nav-btn {
    width: 45px;
}
.nav-btn svg {
    width: 17px;
}
.nav-btn.dim {
    opacity: .45;
}
.address {
    flex: 1;
    display: flex;
    align-items: center;
    gap: 10px;
    height: 42px;
    margin: 0 12px 0 12px;
    padding: 0 16px 0 3px;
    border-radius: 21px;
    background-color: #f2e6ec;
}
.site-info {
    display: flex;
    align-items: center;
    justify-content: center;
    width: 34px;
    height: 34px;
    border-radius: 17px;
    background-color: #fff7f6;
}
.site-info svg {
    width: 16px;
}
.url {
    flex: 1;
    font-size: 17px;
}
.url b {
    font-weight: 400;
    color: #111;
}
.addr-btn {
    width: 30px;
}
.addr-btn svg {
    width: 21px;
}
.nav-btn.ext {
    margin-right: 8px;
}
.nav-btn.ext svg {
    width: 21px;
}
.nav-btn.menu {
    margin-left: 10px;
    width: 42px;
}
.nav-btn.menu svg {
    width: 16px;
}
.divider {
    width: 2px;
    height: 20px;
    background-color: #fcd3db;
}
.avatar {
    width: 25px;
    height: 25px;
    margin-left: 20px;
    border-radius: 50%;
    background-color: #7a56c2;
    color: #fff;
    font-size: 13px;
    line-height: 25px;
    text-align: center;
}
.bookmarks {
    display: flex;
    align-items: center;
    gap: 22px;
    height: 32px;
    padding: 0 18px 0 16px;
    font-size: 14px;
    white-space: nowrap;
}
.bookmarks .apps {
    width: 18px;
}
.bookmarks a {
    display: flex;
    align-items: center;
    gap: 8px;
}
.bookmarks .first {
    margin-left: -5px;
}
.bookmarks a svg {
    width: 20px;
    height: 20px;
}
.more {
    margin-left: auto;
    font-size: 22px;
}

/* Application header */
.app-header {
    flex: none;
    position: relative;
    display: flex;
    align-items: center;
    height: 88px;
    padding: 0 24px 0 20px;
    background-color: #2f2f2f;
    color: #fff;
}
.app-header .logo {
    width: 64px;
    height: 64px;
    margin-bottom: 4px;
}
.brand {
    display: flex;
    flex-direction: column;
    align-items: flex-end;
    width: 83px;
    font-family: "Open Sans", sans-serif;
    font-size: 27px;
    line-height: 24px;
}
.brand small {
    font-size: 13px;
    line-height: 16px;
    color: #1aa892;
}
.btn-handshake {
    display: flex;
    align-items: center;
    justify-content: center;
    width: 47px;
    height: 47px;
    margin: 0 auto 0 41px;
    border-radius: 5px;
    background-color: #28a745;
}
.btn-handshake svg {
    width: 28px;
    height: 22px;
}
.account {
    margin-right: 18px;
    line-height: 25px;
}
.account-line {
    display: flex;
    align-items: center;
}
mark {
    padding: 0 2px;
    border-radius: 4px;
    background-color: #ffff5c;
    color: #111;
}
.account mark {
    line-height: 23px;
}
.carrier {
    margin-left: 2px;
    padding-left: 5px;
    border-left: 1px solid #4a4f5c;
    font-weight: bold;
    line-height: 23px;
    color: #f5cc4c;
}
.account-pin {
    padding-left: 76px;
    color: #d5d5d5;
}
.btn {
    display: inline-flex;
    align-items: center;
    justify-content: center;
    gap: 10px;
    height: 38px;
    padding: 0 11px;
    border: 1px solid transparent;
    border-radius: 5px;
    white-space: nowrap;
}
.btn-top {
    height: 47px;
    margin-left: 11px;
    padding: 0 14px;
}
.account + .btn-top {
    margin-left: 0;
}
.btn-teal {
    background-color: #00806e;
    border-color: #006b5c;
    color: #fff;
}
.btn-outline {
    background-color: transparent;
    border-color: #3c4f70;
    color: #3c4f70;
}
.btn-green {
    background-color: #28a745;
    color: #fff;
}
.btn-yellow {
    background-color: #ffc107;
    color: #212529;
}
.btn-red {
    background-color: #dc3545;
    color: #fff;
}
.faded {
    opacity: .65;
}
.segoe {
    gap: 9px;
    padding: 0 10px;
    font-family: "Open Sans", "Noto Sans", sans-serif;
    font-size: 16px;
}
.caret {
    width: 0;
    height: 0;
    border: 5px solid transparent;
    border-top-color: currentColor;
    border-bottom: none;
}
.btn-group {
    display: flex;
}
.btn-group .btn:first-child {
    border-radius: 5px 0 0 5px;
}
.btn-group .btn:last-child {
    margin-left: -1px;
    border-radius: 0 5px 5px 0;
}
.log-editing {
    position: absolute;
    left: 50%;
    top: 13px;
    transform: translateX(-50%);
    display: flex;
    align-items: center;
    width: 625px;
    height: 68px;
    padding: 0 13px 0 30px;
    border-radius: 5px;
    background-image: linear-gradient(#f6d77f, #e6a10c);
    color: #343a47;
}
.le-info {
    width: 18px;
    height: 18px;
}
.le-text {
    flex: 1;
    text-align: center;
    font-size: 13px;
    line-height: 20px;
    white-space: nowrap;
}
.le-text strong {
    font-family: "Open Sans", sans-serif;
    font-weight: 800;
    font-size: 17px;
}
.le-text svg {
    vertical-align: -2px;
}
.le-text a {
    text-decoration: underline;
}
.le-timer {
    margin-right: 34px;
    font-size: 34px;
    line-height: 40px;
}
.le-edit {
    display: block;
    width: 22px;
    height: 22px;
    margin-right: 17px;
}
.le-next {
    display: block;
    width: 14px;
    height: 20px;
}

/* Page body */
.shell {
    flex: 1;
    position: relative;
    display: grid;
    grid-template-columns: 63px 1211fr 634fr 12px;
    grid-template-rows: minmax(0, 1fr);
    min-height: 0;
    background-image: linear-gradient(to top, #f4fffe 25px, #fff 25px);
}
.sidebar {
    display: flex;
    flex-direction: column;
    align-items: center;
    gap: 28px;
    padding-top: 22px;
    border-right: 6px solid #e9e9f1;
    background-color: #2f2f2f;
    color: #dedcd4;
}
.sidebar a {
    display: flex;
    height: 24px;
}
.sidebar svg {
    width: 24px;
    height: 24px;
}
.burger {
    display: flex;
    flex-direction: column;
    gap: 7px;
    margin-bottom: 12px;
}
.burger i {
    width: 28px;
    height: 2px;
    background-color: #fff;
}
.editor {
    display: flex;
    flex-direction: column;
    min-width: 0;
    padding: 18px 0 19px 18px;
}
.title-row {
    display: flex;
    align-items: center;
    height: 39px;
}
h1 {
    margin: 0 82px 0 0;
    font-size: 31px;
    font-weight: 400;
    line-height: 37px;
    color: #98a0b2;
}
.title-row .btn-group .btn {
    width: 37px;
    padding: 0;
}
.btn-info {
    width: 38px;
    margin-left: 6px;
    padding: 0;
}
.driver-pick {
    display: flex;
    align-items: center;
    margin: 0 54px 0 36px;
}
.driver-pick select {
    width: 218px;
    height: 39px;
    padding: 0 28px 0 13px;
    appearance: none;
    border: 1px solid #ced4da;
    border-radius: 5px;
    background: linear-gradient(45deg, transparent 50%, #999 50%) right 20px center / 6px 6px no-repeat, linear-gradient(-45deg, transparent 50%, #999 50%) right 14px center / 6px 6px no-repeat, #fff;
}
.driver-pick .btn {
    width: 36px;
    padding: 0;
}
.field {
    min-width: 0;
    height: 39px;
    padding: 0 11px;
    border: 1px solid #ced4da;
    border-radius: 5px;
    background-color: #fff;
    color: #495057;
}
.date {
    width: 270px;
}
.viewer {
    align-self: flex-start;
    margin: 10px 0 19px;
    padding: 0 10px;
}
.tools-row {
    display: flex;
    margin-top: 19px;
    height: 123px;
}
.tabs {
    display: flex;
    height: 44px;
    border: 1px solid #dee2e6;
    border-radius: 5px;
}
.tabs button {
    padding: 0 19px;
    border-right: 1px solid #dee2e6;
    font-size: 20px;
}
.tabs button:last-child {
    border-right: none;
}
.tabs .active {
    background-color: #009a85;
    color: #fff;
    border-radius: 5px 0 0 5px;
}
.gauges {
    display: flex;
    gap: 7px;
    margin: 4px -70px 0 auto;
    color: #3c4f70;
}
.gauge {
    width: 100px;
    height: 100px;
    display: grid;
}
.gauge > * {
    grid-area: 1 / 1;
}
.gauge circle {
    fill: none;
    stroke: #eee;
    stroke-width: 6;
}
.gauge .arc {
    stroke: #dc3545;
    stroke-linecap: round;
    transform: rotate(-90deg);
    transform-origin: 50px 50px;
}
.gauge-text {
    position: relative;
    z-index: 2;
    display: flex;
    flex-direction: column;
    gap: 6px;
    align-items: center;
    padding-top: 23px;
    font-size: 14px;
    line-height: 14px;
    text-align: center;
    white-space: nowrap;
}
.gauge-text.two {
    gap: 0;
}
.gauge-text b {
    font-size: 22px;
    line-height: 24px;
}
.controls {
    position: relative;
    z-index: 1;
    display: flex;
    flex-direction: column;
    gap: 20px;
    align-items: flex-end;
}
.controls-line {
    display: flex;
    gap: 5px;
}
.upload {
    position: relative;
    gap: 14px;
    width: 187px;
}
.legend {
    gap: 9px;
    width: 100px;
}
.chips {
    position: absolute;
    left: 12px;
    top: -15px;
    display: flex;
    gap: 5px;
}
.chip {
    display: flex;
    align-items: center;
    gap: 4px;
    height: 23px;
    padding: 0 5px;
    border-radius: 5px;
    background-color: #28a745;
    color: #fff;
    font-size: 15px;
    font-weight: bold;
}
.chip svg {
    width: 11px;
    height: 14px;
}
.chip .i16 {
    width: 17px;
}
.chip.dark {
    margin-left: 5px;
    padding: 0 6px;
    background-color: #343a47;
}
.badges {
    display: flex;
    flex-direction: column;
    gap: 6px;
}
.badges span {
    width: 74px;
    border-radius: 5px;
    background-color: #dc3545;
    color: #fff;
    font-size: 16px;
    font-weight: bold;
    line-height: 22px;
    text-align: center;
}
.big .btn {
    height: 47px;
    gap: 17px;
    padding: 0 12px;
    font-size: 20px;
}
.big .btn:last-child {
    gap: 10px;
}

/* Logs */
.log-scroll {
    flex: 1;
    display: flex;
    min-height: 0;
    overflow: hidden;
}
.log-list {
    flex: 1;
}
.log {
    position: relative;
    display: grid;
    grid-template-columns: 63px 1fr 182px;
}
.chart {
    width: 100%;
    overflow: visible;
}
.row-names, .totals {
    display: flex;
    flex-direction: column;
    padding-top: 17px;
    font-size: 21px;
    font-weight: bold;
}
.row-names span, .totals span {
    height: 54px;
    line-height: 40px;
}
.row-names {
    padding-right: 19px;
    text-align: right;
}
.totals {
    position: relative;
    padding-left: 15px;
}
.row-names.second, .totals.second {
    padding-top: 26px;
}
.off { color: #d02b2b; }
.sb { color: #1c2d42; }
.d { color: #3b7a3b; }
.on { color: #d68910; }
.frame {
    fill: none;
    stroke: #c4c4c4;
    stroke-width: 1;
}
.shade {
    fill: #3b7a3b;
    fill-opacity: .2;
}
.shade-grey {
    fill: #ccc;
    fill-opacity: .7;
}
.shade-light {
    fill: #bbb;
    fill-opacity: .35;
}
.labels text {
    font-size: 15px;
    font-weight: bold;
    fill: #444;
    text-anchor: middle;
}
.hours text {
    font-size: 14px;
    fill: #999;
    text-anchor: middle;
}
.dash {
    fill: none;
    stroke-width: 4;
    stroke-dasharray: 6 6.500;
}
.dash.green { stroke: #3b7a3b; }
.dash.red { stroke: #d02b2b; }
.log-actions {
    position: absolute;
    right: 6px;
    bottom: -18px;
    display: flex;
    gap: 6px;
}
.log-actions .btn-outline {
    width: 44px;
    background-color: #fff;
}
.log-actions .segoe {
    padding: 0 12px;
}
.day-head {
    display: flex;
    gap: 6px;
    padding: 44px 0 13px 7px;
}
.green-group {
    color: #28a745;
}
.green-group .btn {
    border-color: #28a745;
}
.green-group .engine {
    opacity: .65;
}
.day-head h2 {
    margin: 18px 0 -2px 78px;
    font-size: 23px;
    line-height: 26px;
    color: #000;
}
.scroll-track {
    flex: none;
    width: 12px;
    background-color: #eceff3;
}
.scroll-track i {
    display: block;
    height: 42px;
    margin-top: 43px;
    background-color: #6b7a92;
}

/* Transaction panel */
.side {
    display: flex;
    flex-direction: column;
    min-width: 0;
    padding: 22px 19px 45px 38px;
}
.side > h2 {
    margin: 0 0 20px 126px;
    font-size: 30px;
    font-weight: 400;
    line-height: 40px;
}
.side-scroll {
    flex: 1;
    display: flex;
    min-height: 0;
    overflow: hidden;
}
.side-content {
    flex: 1;
}
.side-track i {
    margin-top: 166px;
}
.card {
    height: 390px;
    padding: 15px;
    border: 1px solid #dee2e6;
    border-radius: 6px;
    white-space: nowrap;
}
.card .spaced {
    margin-top: 48px;
}
.card .ok {
    color: #28a745;
}
.check-line {
    display: flex;
    align-items: center;
    gap: 10px;
    color: #6c757d;
}
.check-line input {
    width: 15px;
    height: 15px;
    margin: 3px 0 0;
}
.card hr {
    margin: 13px 0 10px;
}
.form-row {
    display: flex;
    min-height: 39px;
}
.form-row > :first-child {
    width: 234px;
    padding-right: 30px;
    white-space: normal;
}
.pass {
    height: 74px;
    padding-top: 5px;
    align-items: flex-start;
}
.pass .btn {
    align-self: flex-end;
}
.pale {
    width: 41px;
    margin-left: -1px;
    opacity: .65;
}
.input-group {
    display: flex;
}
.input-group .field {
    width: 167px;
    border-radius: 5px 0 0 5px;
}
.input-group .btn {
    width: 39px;
    height: 39px;
    border-radius: 0 5px 5px 0;
}
.alert {
    display: flex;
    align-items: flex-start;
    justify-content: space-between;
    height: 110px;
    margin: 10px 0 7px;
    padding: 15px 25px;
    border: 1px solid #f5c6cb;
    border-radius: 5px;
    background-color: #f8d7da;
    color: #721c24;
    font-size: 20px;
    line-height: 30px;
}
.alert p {
    width: 280px;
}
.alert .btn {
    width: 192px;
    height: 77px;
    padding: 0 30px;
    font-size: 20px;
    line-height: 30px;
    white-space: normal;
}
.switch {
    display: flex;
    align-items: center;
    gap: 10px;
    height: 24px;
    margin-bottom: 3px;
    font-size: 20px;
}
.switch input {
    width: 35px;
    height: 20px;
    margin: 0;
    appearance: none;
    border: 1px solid #adb5bd;
    border-radius: 10px;
    background: radial-gradient(circle at 9px 9px, #adb5bd 7px, transparent 8px);
}
.actions {
    display: flex;
    flex-wrap: wrap;
    justify-content: center;
    gap: 5px;
}
.actions .btn {
    position: relative;
    height: 45px;
    padding: 0 14px;
    font-size: 20px;
}
.count {
    position: absolute;
    right: 4px;
    top: -1px;
    width: 22px;
    height: 20px;
    border-radius: 10px;
    background-color: #ffc107;
    color: #212529;
    font-size: 14px;
    line-height: 18px;
}
.edge {
    margin-bottom: 48px;
    background-color: #2f2f2f;
}

/* Notifications */
.toasts {
    position: absolute;
    right: 15px;
    top: 6px;
    display: flex;
    flex-direction: column;
    gap: 8px;
    width: 375px;
}
.toast {
    position: relative;
    display: flex;
    align-items: center;
    gap: 14px;
    padding: 19px 20px 18px 19px;
    border-radius: 4px;
    box-shadow: 0 0 14px #777;
    color: #fff;
    font-size: 20px;
    line-height: 30px;
}
.toast.error {
    background-color: #bd362f;
}
.toast.success {
    min-height: 75px;
    padding-right: 0;
    background-color: #51a351;
}
.toast p {
    flex: 1;
}
.toast.success p {
    padding-bottom: 9px;
}
.toast button {
    position: absolute;
    right: 12px;
    top: 20px;
}

/* Footer */
.app-footer {
    flex: none;
    display: flex;
    align-items: center;
    justify-content: flex-end;
    gap: 18px;
    height: 31px;
    padding: 0 26px 6px 0;
    background-color: #f4f4f4;
}
.titan {
    display: flex;
    align-items: center;
    gap: 0;
    padding-top: 5px;
    font-family: Roboto, sans-serif;
    font-size: 16px;
}
.titan svg {
    width: 25px;
    height: 25px;
}
.titan em {
    font-style: normal;
    color: #1b94d2;
}

/* Taskbar */
.taskbar {
    flex: none;
    display: flex;
    height: 50px;
    background-color: #1d1d1d;
    color: #fff;
    font-family: "Open Sans", "Noto Sans", sans-serif;
}
.start {
    width: 60px;
    color: #fff;
}
.start svg {
    width: 20px;
}
.search {
    display: flex;
    align-items: center;
    width: 360px;
    padding: 0 12px 0 14px;
    border: 1px solid #c4c4c4;
    background-color: #f2f2f2;
}
.search .glass {
    width: 21px;
}
.search input {
    flex: 1;
    min-width: 0;
    padding: 0 0 0 14px;
    border: none;
    background: none;
    color: #333;
}
.search input::placeholder {
    color: #333;
}
.sparkle {
    width: 76px;
}
.task {
    width: 51px;
    height: 50px;
    margin: 0 6px 0 5px;
    border-bottom: 3px solid transparent;
}
.task svg {
    width: 32px;
    vertical-align: middle;
}
.task.open {
    border-bottom-color: #e6f7a8;
}
.task.current {
    width: 61px;
    margin: 0 0 0 4px;
    background-color: #4a4a4a;
}
.tray {
    display: flex;
    align-items: center;
    margin-left: auto;
    padding-right: 20px;
    font-size: 17px;
}
.weather { width: 32px; }
.forecast { margin: 0 30px 0 9px; }
.up { width: 16px; }
.tg { width: 20px; margin: 0 8px 0 13px; }
.battery { width: 22px; margin-right: 13px; }
.lang { font-size: 15px; }
.clock {
    margin: 0 22px 0 18px;
    font-size: 14px;
    line-height: 22px;
    text-align: center;
}
.notify { width: 32px; }
.cursor {
    position: absolute;
    left: 1889px;
    top: 677px;
    width: 13px;
    height: 20px;
}
```
